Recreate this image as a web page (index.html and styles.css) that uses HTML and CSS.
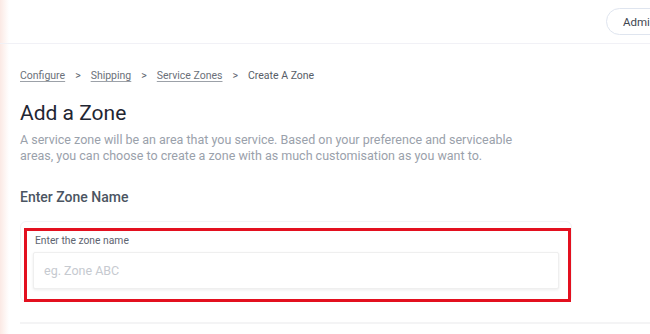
FILE: index.html
```html
<!DOCTYPE html>
<html lang="en">
<head>
<meta charset="utf-8">
<title>Add a Zone</title>
<link rel="stylesheet" href="styles.css">
</head>
<body>
<div class="page">
  <header class="topbar">
    <button class="admin-btn">Admin</button>
  </header>
  <main class="content">
    <nav class="crumbs">
      <a href="#" class="crumb-link">Configure</a>
      <span class="sep">&gt;</span>
      <a href="#" class="crumb-link">Shipping</a>
      <span class="sep">&gt;</span>
      <a href="#" class="crumb-link">Service Zones</a>
      <span class="sep">&gt;</span>
      <span class="crumb-current">Create A Zone</span>
    </nav>
    <h1 class="title">Add a Zone</h1>
    <p class="desc">A service zone will be an area that you service. Based on your preference and serviceable areas, you can choose to create a zone with as much customisation as you want to.</p>
    <h2 class="section-title">Enter Zone Name</h2>
    <div class="card">
      <label class="field-label" for="zone">Enter the zone name</label>
      <input id="zone" class="field-input" type="text" placeholder="eg. Zone ABC">
      <div class="highlight"></div>
    </div>
    <div class="divider"></div>
  </main>
</div>
</body>
</html>
```
FILE: styles.css
```css
html, body {
  margin: 0;
  padding: 0;
  height: 100%;
  overflow: hidden;
}
body {
  font-family: Roboto, "Liberation Sans", sans-serif;
  background: linear-gradient(to right, #fbe9e4 0px, #fdf3f0 4px, #ffffff 9px);
  color: #1f2633;
}
.page {
  width: 100%;
}
.topbar {
  height: 43px;
  border-bottom: 1px solid #f1f1f6;
  display: flex;
  justify-content: flex-end;
  align-items: center;
}
.admin-btn {
  font-family: Roboto, "Liberation Sans", sans-serif;
  font-size: 11.5px;
  color: #3f4650;
  background: #ffffff;
  border: 1px solid #dfe5ef;
  border-radius: 14px;
  height: 27px;
  width: 64px;
  padding: 0 0 0 16px;
  text-align: left;
  margin-right: -20px;
}
.content {
  padding: 25px 0 0 20px;
}
.crumbs {
  display: flex;
  align-items: center;
  gap: 9px;
  font-size: 10.5px;
  line-height: 14px;
  height: 14px;
}
.crumb-link {
  color: #6b7079;
  text-decoration: underline;
  text-decoration-color: #9ca1a8;
  text-underline-offset: 2px;
}
.sep {
  color: #5f6570;
  padding: 0 1px;
}
.crumb-current {
  color: #575d67;
}
.title {
  margin: 17px 0 0;
  font-size: 21px;
  line-height: 26px;
  font-weight: 400;
  color: #1f2633;
}
.desc {
  margin: 6px 0 0;
  font-size: 12.5px;
  line-height: 16px;
  color: #9aa1ab;
  max-width: 500px;
}
.section-title {
  margin: 24px 0 0;
  font-size: 14px;
  line-height: 18px;
  font-weight: 500;
  color: #4b5562;
}
.card {
  position: relative;
  margin-top: 15px;
  width: 552px;
  box-sizing: border-box;
  border: 1px solid #f3f3f5;
  border-radius: 6px;
  padding: 13px 12px 12px 12px;
}
.field-label {
  display: block;
  font-size: 10.3px;
  line-height: 12px;
  color: #5e6470;
  padding-left: 2px;
}
.field-input {
  display: block;
  margin-top: 5px;
  width: 100%;
  height: 37px;
  box-sizing: border-box;
  border: 1px solid #efefef;
  box-shadow: 0 1px 3px rgba(0, 0, 0, 0.08);
  border-radius: 2px;
  padding: 0 10px;
  font-family: Roboto, "Liberation Sans", sans-serif;
  font-size: 12.5px;
  color: #333;
  outline: none;
}
.field-input::placeholder {
  color: #c6cad0;
}
.highlight {
  position: absolute;
  left: 3px;
  top: 6px;
  width: 547px;
  height: 74px;
  box-sizing: border-box;
  border: 3px solid #e3101f;
  pointer-events: none;
}
.divider {
  margin-top: 20px;
  border-top: 2px solid #f4f4f5;
}
```
